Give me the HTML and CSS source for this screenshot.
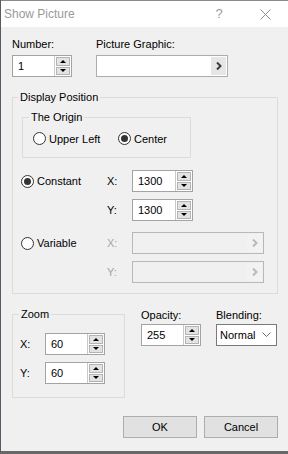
FILE: index.html
```html
<!DOCTYPE html>
<html>
<head>
<meta charset="utf-8">
<link rel="stylesheet" href="styles.css">
</head>
<body>
<div class="window">
  <div class="titlebar">
    <span class="title">Show Picture</span>
    <span class="help">?</span>
    <svg class="close" width="11" height="11" viewBox="0 0 11 11"><path d="M0.5 0.5 L10.5 10.5 M10.5 0.5 L0.5 10.5" stroke="#8e8e8e" stroke-width="1" fill="none"/></svg>
  </div>
  <div class="content">
    <div class="row-top">
      <div class="field">
        <span class="lbl">Number:</span>
        <div class="spin">
          <span class="val">1</span>
          <span class="btns"><span class="sb"><i class="up"></i></span><span class="sb"><i class="down"></i></span></span>
        </div>
      </div>
      <div class="field">
        <span class="lbl">Picture Graphic:</span>
        <div class="picker">
          <span class="pick-btn"><svg width="6" height="8" viewBox="0 0 6 8"><path d="M1 0.5 L4.5 4 L1 7.5" stroke="#3c3c3c" stroke-width="2" fill="none"/></svg></span>
        </div>
      </div>
    </div>

    <fieldset class="group display">
      <legend>Display Position</legend>
      <fieldset class="group origin">
        <legend>The Origin</legend>
        <div class="radio-row">
          <span class="radio first"><span class="circle"></span>Upper Left</span>
          <span class="radio"><span class="circle on"></span>Center</span>
        </div>
      </fieldset>
      <div class="pos">
        <div class="prow">
          <span class="radio"><span class="circle on"></span>Constant</span>
          <span class="xy">X:</span>
          <div class="spin w61"><span class="val">1300</span><span class="btns"><span class="sb"><i class="up"></i></span><span class="sb"><i class="down"></i></span></span></div>
        </div>
        <div class="prow g7">
          <span></span>
          <span class="xy">Y:</span>
          <div class="spin w61"><span class="val">1300</span><span class="btns"><span class="sb"><i class="up"></i></span><span class="sb"><i class="down"></i></span></span></div>
        </div>
        <div class="prow g11">
          <span class="radio"><span class="circle"></span>Variable</span>
          <span class="xy dis">X:</span>
          <div class="picker off"><span class="pick-btn"><svg width="6" height="8" viewBox="0 0 6 8"><path d="M1 0.5 L4.5 4 L1 7.5" stroke="#b9b9b9" stroke-width="2" fill="none"/></svg></span></div>
        </div>
        <div class="prow g7">
          <span></span>
          <span class="xy dis">Y:</span>
          <div class="picker off"><span class="pick-btn"><svg width="6" height="8" viewBox="0 0 6 8"><path d="M1 0.5 L4.5 4 L1 7.5" stroke="#b9b9b9" stroke-width="2" fill="none"/></svg></span></div>
        </div>
      </div>
    </fieldset>

    <div class="row-bottom">
      <fieldset class="group zoom">
        <legend>Zoom</legend>
        <div class="zrow first">
          <span class="xy">X:</span>
          <div class="spin"><span class="val">60</span><span class="btns"><span class="sb"><i class="up"></i></span><span class="sb"><i class="down"></i></span></span></div>
        </div>
        <div class="zrow">
          <span class="xy">Y:</span>
          <div class="spin"><span class="val">60</span><span class="btns"><span class="sb"><i class="up"></i></span><span class="sb"><i class="down"></i></span></span></div>
        </div>
      </fieldset>
      <div class="field opacity">
        <span class="lbl">Opacity:</span>
        <div class="spin"><span class="val">255</span><span class="btns"><span class="sb"><i class="up"></i></span><span class="sb"><i class="down"></i></span></span></div>
      </div>
      <div class="field blend">
        <span class="lbl">Blending:</span>
        <div class="select"><span class="val">Normal</span><svg width="9" height="6" viewBox="0 0 9 6"><path d="M0.5 0.5 L4.5 4.5 L8.5 0.5" stroke="#6d6d6d" stroke-width="1" fill="none"/></svg></div>
      </div>
    </div>

    <div class="buttons">
      <span class="btn">OK</span>
      <span class="btn">Cancel</span>
    </div>
  </div>
</div>
</body>
</html>
```
FILE: styles.css
```css
* { box-sizing: border-box; }
html, body { margin: 0; padding: 0; }
body {
  width: 288px;
  height: 454px;
  overflow: hidden;
  background: #f0f0f0;
  font-family: "Liberation Sans", Arial, sans-serif;
  font-size: 11px;
  line-height: 14px;
  color: #000;
}
.window {
  height: 454px;
  border-left: 1px solid #5a5a66;
  border-bottom: 3px solid #686868;
  display: flex;
  flex-direction: column;
}
.titlebar {
  height: 27px;
  flex: none;
  background: #fff;
  border-top: 1px solid #8a8a8a;
  display: flex;
  align-items: center;
  padding: 0 17px 0 3px;
  font-size: 12px;
  color: #9a9a9a;
}
.title { flex: 1; }
.help { width: 12px; text-align: center; margin-right: 35px; font-size: 13px; }
.close { display: block; }

.content { padding-left: 11px; }

.row-top { display: flex; gap: 24px; margin-top: 10px; }
.field { display: flex; flex-direction: column; }
.lbl { line-height: 14px; margin-bottom: 4px; }

.spin {
  width: 60px;
  height: 22px;
  border: 1px solid #a3a3a3;
  background: #fff;
  display: flex;
}
.spin.w61 { width: 61px; }
.spin .val { flex: 1; padding-left: 5px; line-height: 20px; }
.btns {
  width: 17px;
  display: flex;
  flex-direction: column;
  gap: 1px;
  padding: 1px 1px 1px 1px;
  border-left: 1px solid #c9c9c9;
}
.sb {
  flex: 1;
  background: #e3e3e3;
  border: 1px solid #b3b3b3;
  display: flex;
  align-items: center;
  justify-content: center;
}
.sb i { width: 0; height: 0; border-left: 3px solid transparent; border-right: 3px solid transparent; }
.sb .up { border-bottom: 3px solid #000; }
.sb .down { border-top: 3px solid #000; }

.picker {
  width: 132px;
  height: 22px;
  border: 1px solid #adadad;
  background: #fff;
  display: flex;
  justify-content: flex-end;
  padding: 1px;
}
.pick-btn {
  width: 15px;
  background: #e6e6e6;
  display: flex;
  align-items: center;
  justify-content: center;
}
.picker.off { background: #f0f0f0; border-color: #b8b8b8; }
.picker.off .pick-btn { background: #f2f2f2; }

.group {
  border: 1px solid #dcdcdc;
  margin: 0;
  padding: 0;
  min-width: 0;
}
.group legend { padding: 0 2px; margin-left: 5px; line-height: 14px; }

.display { width: 266px; margin-top: 13px; padding-bottom: 10px; }
.origin { width: 169px; margin: 6px 0 0 9px; padding-bottom: 11px; }
.origin legend { margin-left: 6px; }
.radio-row { display: flex; margin: 7px 0 0 10px; height: 15px; align-items: center; }
.radio { display: flex; align-items: center; gap: 3px; }
.radio.first { width: 85px; }
.circle {
  width: 13px;
  height: 13px;
  border: 1px solid #333;
  border-radius: 50%;
  background: #fff;
  display: flex;
  align-items: center;
  justify-content: center;
}
.circle.on::after {
  content: "";
  width: 7px;
  height: 7px;
  border-radius: 50%;
  background: #333;
}

.pos { margin: 12px 0 0 8px; }
.prow {
  display: grid;
  grid-template-columns: 86px 25px auto;
  align-items: center;
  height: 22px;
}
.prow.g7 { margin-top: 7px; }
.prow.g11 { margin-top: 11px; }
.xy { line-height: 14px; }
.xy.dis { color: #a6a6a6; }

.row-bottom { display: flex; align-items: flex-start; margin-top: 13px; }
.zoom { width: 113px; padding-bottom: 13px; }
.zoom legend { margin-left: 6px; }
.zrow { display: grid; grid-template-columns: 25px auto; align-items: center; margin: 7px 0 0 7px; }
.zrow.first { margin-top: 12px; }
.opacity { margin: 1px 0 0 16px; }
.blend { margin: 1px 0 0 15px; }
.opacity .lbl, .blend .lbl { margin-bottom: 2px; }

.select {
  width: 61px;
  height: 22px;
  border: 1px solid #7a7a7a;
  background: #fff;
  display: flex;
  align-items: center;
  padding: 0 5px 0 3px;
}
.select .val { flex: 1; }
.select svg { display: block; }

.buttons { width: 266px; display: flex; justify-content: flex-end; gap: 7px; margin-top: 18px; }
.btn {
  width: 74px;
  height: 22px;
  border: 1px solid #adadad;
  background: #e1e1e1;
  display: flex;
  align-items: center;
  justify-content: center;
}
```
